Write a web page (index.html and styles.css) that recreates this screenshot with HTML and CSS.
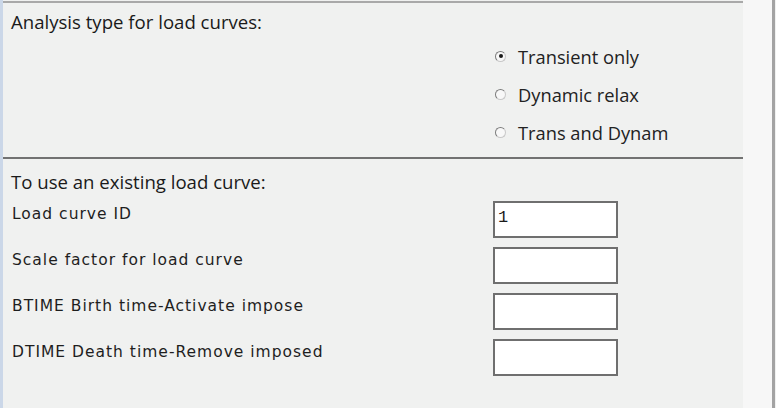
FILE: index.html
```html
<!DOCTYPE html>
<html>
<head>
<meta charset="utf-8">
<link rel="stylesheet" href="styles.css">
</head>
<body>
<div class="frame">
  <div class="edge-left"></div>
  <div class="panel">
    <section class="analysis">
      <div class="heading">Analysis type for load curves:</div>
      <div class="radios">
        <label class="radio"><span class="dot checked"></span><span>Transient only</span></label>
        <label class="radio"><span class="dot"></span><span>Dynamic relax</span></label>
        <label class="radio"><span class="dot"></span><span>Trans and Dynam</span></label>
      </div>
    </section>
    <section class="curve">
      <div class="heading2">To use an existing load curve:</div>
      <div class="rows">
        <div class="row"><span class="label">Load curve ID</span><div class="box">1</div></div>
        <div class="row"><span class="label">Scale factor for load curve</span><div class="box"></div></div>
        <div class="row"><span class="label">BTIME Birth time-Activate impose</span><div class="box"></div></div>
        <div class="row"><span class="label">DTIME Death time-Remove imposed</span><div class="box"></div></div>
      </div>
    </section>
  </div>
  <div class="gutter"></div>
  <div class="edge-right"></div>
</div>
</body>
</html>
```
FILE: styles.css
```css
html, body {
  margin: 0;
  padding: 0;
  background: #f0f1f0;
}
body {
  width: 776px;
  height: 408px;
  overflow: hidden;
  font-family: "Open Sans", "Noto Sans", sans-serif;
  color: #1a1a1a;
}
.frame {
  display: flex;
  height: 408px;
}
.edge-left {
  width: 3px;
  background: #cbd7e8;
}
.panel {
  width: 740px;
  display: flex;
  flex-direction: column;
  padding-top: 1px;
}
.analysis {
  border-top: 2px solid #a9a9a9;
  height: 154px;
  display: flex;
  flex-direction: column;
}
.heading {
  font-size: 18.6px;
  padding-left: 8px;
  padding-top: 7px;
  line-height: 24px;
}
.radios {
  display: flex;
  flex-direction: column;
  padding-left: 492px;
  padding-top: 12px;
  gap: 16px;
}
.radio {
  display: flex;
  align-items: center;
  gap: 12px;
  font-size: 18.3px;
  line-height: 22px;
  height: 22px;
  color: #222;
}
.dot {
  width: 11px;
  height: 11px;
  border-radius: 50%;
  border: 1px solid #7c7c7c;
  border-right-color: #c8c8c8;
  border-bottom-color: #c8c8c8;
  background: #f8f8f8;
  box-sizing: border-box;
  position: relative;
  margin-top: -2px;
}
.dot.checked::after {
  content: "";
  position: absolute;
  left: 2.5px;
  top: 2.5px;
  width: 4px;
  height: 4px;
  border-radius: 50%;
  background: #1a1a1a;
}
.curve {
  border-top: 2px solid #727272;
  display: flex;
  flex-direction: column;
}
.heading2 {
  font-size: 18.6px;
  padding-left: 8px;
  padding-top: 11px;
  line-height: 24px;
}
.rows {
  display: flex;
  flex-direction: column;
  gap: 9px;
  padding-top: 7px;
}
.row {
  display: flex;
  align-items: flex-start;
  height: 37px;
}
.label {
  width: 481px;
  padding-left: 9px;
  font-family: "DejaVu Sans", sans-serif;
  font-size: 15.5px;
  letter-spacing: 1px;
  line-height: 20px;
  margin-top: 3px;
  color: #1e1e1e;
}
.box {
  width: 118px;
  height: 33px;
  border: 2px solid #6f6f6f;
  background: #ffffff;
  font-family: "Liberation Mono", monospace;
  font-size: 17px;
  line-height: 30px;
  padding-left: 3px;
  box-sizing: content-box;
}
.gutter {
  width: 29px;
  background: #f7f7f7;
}
.edge-right {
  width: 3px;
  background: #a3a3a3;
}
```
